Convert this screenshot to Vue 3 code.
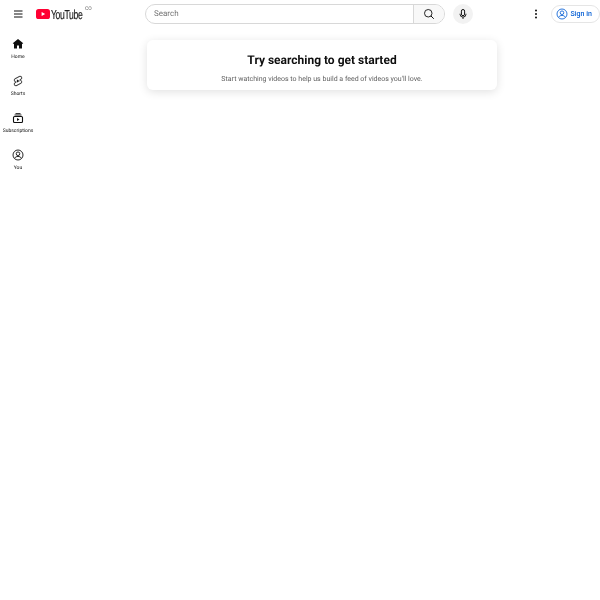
<template>
  <div class="app">
    <header class="topbar">
      <div class="start">
        <button class="menu-btn" aria-label="Guide">
          <svg viewBox="0 0 24 24" class="ic12"><path d="M4 6h17M4 12h17M4 18h17" fill="none" stroke="#0f0f0f" stroke-width="2.4"/></svg>
        </button>
        <div class="logo">
          <svg viewBox="0 0 14 10" class="logo-mark">
            <rect width="14" height="10" rx="2.6" fill="#ff0033" />
            <path d="M5.6 2.9v4.2L9.2 5z" fill="#fff" />
          </svg>
          <span class="logo-text">YouTube</span>
          <span class="country">CO</span>
        </div>
      </div>

      <div class="center">
        <div class="search">
          <div class="search-input">Search</div>
          <button class="search-btn" aria-label="Search">
            <svg viewBox="0 0 24 24" class="ic12"><path d="M16.3 16.3 21 21" stroke="#0f0f0f" stroke-width="2" stroke-linecap="round" fill="none"/><circle cx="10.5" cy="10.5" r="7.5" stroke="#0f0f0f" stroke-width="1.8" fill="none"/></svg>
          </button>
        </div>
        <button class="mic-btn" aria-label="Voice search">
          <svg viewBox="0 0 24 24" class="ic12"><path d="M12 3a3.2 3.2 0 0 0-3.2 3.2v6a3.2 3.2 0 0 0 6.4 0v-6A3.2 3.2 0 0 0 12 3Z" fill="none" stroke="#0f0f0f" stroke-width="2"/><path d="M6 11.5v.7a6 6 0 0 0 12 0v-.7M12 18.2V22" fill="none" stroke="#0f0f0f" stroke-width="1.8"/></svg>
        </button>
      </div>

      <div class="end">
        <button class="more-btn" aria-label="Settings">
          <svg viewBox="0 0 24 24" class="ic12"><circle cx="12" cy="5" r="2" fill="#0f0f0f"/><circle cx="12" cy="12" r="2" fill="#0f0f0f"/><circle cx="12" cy="19" r="2" fill="#0f0f0f"/></svg>
        </button>
        <button class="signin">
          <svg viewBox="0 0 24 24" class="ic12"><circle cx="12" cy="12" r="10" fill="none" stroke="#065fd4" stroke-width="1.7"/><circle cx="12" cy="9.5" r="3.6" fill="none" stroke="#065fd4" stroke-width="1.7"/><path d="M5.2 18.5c1.6-2.6 4-3.6 6.8-3.6s5.2 1 6.8 3.6" fill="none" stroke="#065fd4" stroke-width="1.7"/></svg>
          <span>Sign in</span>
        </button>
      </div>
    </header>

    <div class="body">
      <nav class="sidebar">
        <a v-for="item in items" :key="item.label" class="nav-item">
          <svg viewBox="0 0 24 24" class="ic12" v-html="item.icon"></svg>
          <span>{{ item.label }}</span>
        </a>
      </nav>

      <main class="content">
        <div class="prompt">
          <h2>Try searching to get started</h2>
          <p>Start watching videos to help us build a feed of videos you'll love.</p>
        </div>
      </main>
    </div>
  </div>
</template>

<script setup>
const items = [
  {
    label: 'Home',
    icon: '<path d="M12 2 1.5 10.5 3 12l1-.8V21h6v-6h4v6h6v-9.8l1 .8 1.5-1.5z" fill="#0f0f0f"/>',
  },
  {
    label: 'Shorts',
    icon: '<path d="M10 14.65v-5.3L15 12l-5 2.65zm7.77-4.33-1.2-.5L18 9.06c1.84-.96 2.53-3.23 1.56-5.06s-3.24-2.53-5.07-1.56L6 6.94c-1.29.68-2.07 2.04-2 3.49.07 1.42.93 2.67 2.22 3.25.03.01 1.2.5 1.2.5L6 14.93c-1.83.97-2.53 3.24-1.56 5.07.97 1.83 3.24 2.53 5.07 1.56l8.5-4.5c1.29-.68 2.06-2.04 1.99-3.49-.07-1.42-.94-2.68-2.23-3.25zm-.23 5.86-8.5 4.5c-1.34.71-3.01.2-3.72-1.14-.71-1.34-.2-3.01 1.14-3.72l2.04-1.08v-1.21l-.69-.28-1.11-.46c-.99-.41-1.65-1.35-1.7-2.41-.05-1.06.52-2.06 1.46-2.56l8.5-4.5c1.34-.71 3.01-.2 3.72 1.14.71 1.34.2 3.01-1.14 3.72L15.5 9.26v1.21l1.8.74c.99.41 1.65 1.35 1.7 2.41.05 1.06-.52 2.06-1.46 2.56z" fill="#0f0f0f" stroke="#0f0f0f" stroke-width="0.5"/>',
  },
  {
    label: 'Subscriptions',
    icon: '<rect x="3" y="9" width="18" height="12" rx="2" fill="none" stroke="#0f0f0f" stroke-width="2.2"/><path d="M5 6h14M7 3.2h10" stroke="#0f0f0f" stroke-width="1.8" fill="none"/><path d="M10 12v6l5-3z" fill="#0f0f0f"/>',
  },
  {
    label: 'You',
    icon: '<circle cx="12" cy="12" r="10" fill="none" stroke="#0f0f0f" stroke-width="1.8"/><circle cx="12" cy="9.5" r="3.6" fill="none" stroke="#0f0f0f" stroke-width="1.8"/><path d="M5.2 18.5c1.6-2.6 4-3.6 6.8-3.6s5.2 1 6.8 3.6" fill="none" stroke="#0f0f0f" stroke-width="1.8"/>',
  },
]
</script>

<style>
html, body {
  margin: 0;
  background: #fff;
}
</style>

<style scoped>
.app {
  width: 600px;
  height: 600px;
  overflow: hidden;
  font-family: Roboto, "Liberation Sans", sans-serif;
  color: #0f0f0f;
  text-rendering: geometricPrecision;
  will-change: transform;
}

button {
  border: none;
  background: none;
  padding: 0;
  font-family: inherit;
  display: flex;
  align-items: center;
  justify-content: center;
}

.ic12 {
  width: 12px;
  height: 12px;
  flex-shrink: 0;
}

.topbar {
  height: 28px;
  display: flex;
  align-items: center;
}

.start {
  width: 145px;
  display: flex;
  align-items: center;
  flex-shrink: 0;
}

.menu-btn {
  width: 36px;
  height: 28px;
}

.logo {
  display: flex;
  align-items: center;
  position: relative;
}

.logo-mark {
  width: 14px;
  height: 10px;
}

.logo-text {
  font-family: "Liberation Sans", sans-serif;
  font-size: 13px;
  letter-spacing: -0.5px;
  margin-left: 1px;
  color: #212121;
  display: inline-block;
  transform: scaleX(0.66);
  transform-origin: left center;
  -webkit-text-stroke: 0.2px #212121;
}

.country {
  position: absolute;
  left: 49px;
  top: -1px;
  font-size: 5px;
  color: #606060;
}

.center {
  width: 335px;
  display: flex;
  align-items: center;
  flex-shrink: 0;
}

.search {
  width: 300px;
  height: 20px;
  display: flex;
  box-sizing: border-box;
  border: 1px solid #d8d8d8;
  border-radius: 10px;
}

.search-input {
  flex: 1;
  font-size: 8px;
  line-height: 18px;
  padding-left: 8px;
  color: #757575;
}

.search-btn {
  width: 31px;
  border-left: 1px solid #d8d8d8;
  background: #f8f8f8;
  border-radius: 0 10px 10px 0;
  padding-right: 1px;
  box-sizing: border-box;
}

.mic-btn {
  width: 20px;
  height: 20px;
  margin-left: 7.5px;
  border-radius: 50%;
  background: #f2f2f2;
}

.end {
  flex: 1;
  display: flex;
  align-items: center;
}

.more-btn {
  width: 20px;
  height: 20px;
  margin-left: 45.5px;
}

.signin {
  width: 49px;
  height: 18px;
  margin-left: 5px;
  box-sizing: border-box;
  justify-content: flex-start;
  padding-left: 4px;
  gap: 3px;
  border: 1px solid #e5e5e5;
  border-radius: 9px;
  color: #065fd4;
  font-size: 7px;
  font-weight: 500;
}

.body {
  display: flex;
}

.sidebar {
  width: 36px;
  flex-shrink: 0;
  display: flex;
  flex-direction: column;
  padding-top: 2px;
}

.nav-item {
  height: 37px;
  display: flex;
  flex-direction: column;
  align-items: center;
  padding-top: 8px;
  box-sizing: border-box;
  gap: 4px;
  font-size: 5px;
  line-height: 7px;
  white-space: nowrap;
}

.content {
  flex: 1;
  padding: 12px 0 0 111px;
}

.prompt {
  width: 350px;
  height: 50px;
  box-sizing: border-box;
  padding-top: 12px;
  border-radius: 6px;
  background: #fff;
  box-shadow: 0 2px 10px rgba(0, 0, 0, 0.12);
  text-align: center;
}

.prompt h2 {
  margin: 0;
  font-size: 12px;
  line-height: 16px;
  font-weight: 700;
}

.prompt p {
  margin: 6px 0 0;
  font-size: 7px;
  line-height: 10px;
  color: #606060;
}
</style>
